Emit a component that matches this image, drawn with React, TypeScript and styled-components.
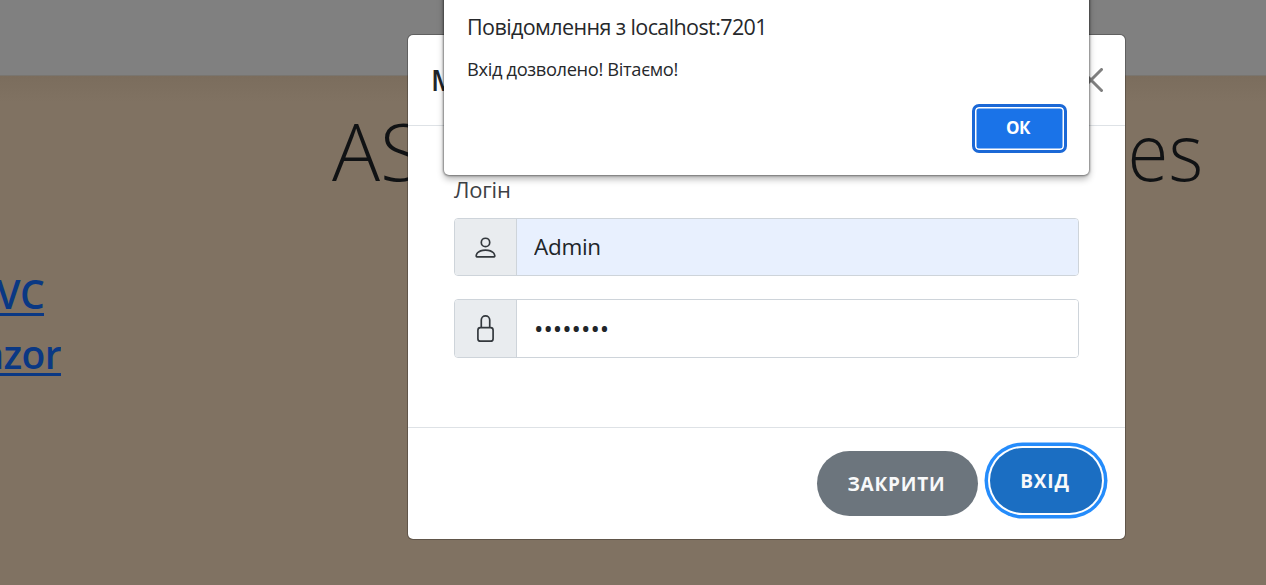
import React from 'react';
import styled, { createGlobalStyle } from 'styled-components';
import { BsPerson, BsLock } from 'react-icons/bs';

const GlobalStyle = createGlobalStyle`
  * { box-sizing: border-box; }
  body {
    margin: 0;
    overflow: hidden;
    background: #807262;
    font-family: "Open Sans", "Noto Sans", sans-serif;
    color: #212529;
  }
`;

const Page = styled.div`
  position: relative;
  height: 585px;
  overflow: hidden;
`;

const Navbar = styled.header`
  height: 76px;
  background: #808080;
  border-bottom: 1px solid #79756f;
`;

const Main = styled.main`
  height: 509px;
  background: linear-gradient(#7b6d5d, #807262 26px);
`;

const Title = styled.h1`
  display: flex;
  justify-content: space-between;
  margin: 0 0 0 332px;
  padding-top: 19px;
  width: 871px;
  font-size: 80px;
  line-height: 110px;
  font-weight: 300;
  color: #101214;
  white-space: nowrap;
`;

const TitleEnd = styled.span`
  transform: scaleX(0.93);
  transform-origin: right;
`;

const Links = styled.nav`
  display: flex;
  flex-direction: column;
  padding-top: 59px;
`;

const TopicLink = styled.a<{ $end: number }>`
  display: flex;
  justify-content: flex-end;
  overflow: hidden;
  width: ${(p) => p.$end}px;
  height: 60px;
  line-height: 60px;
  font-size: 39px;
  font-weight: 600;
  letter-spacing: -0.6px;
  color: #0a3884;
  white-space: nowrap;
  text-decoration: underline;
  text-decoration-thickness: 2.5px;
  text-underline-offset: 4px;
`;

const Modal = styled.section`
  position: absolute;
  left: 407px;
  top: 34px;
  width: 719px;
  height: 506px;
  display: flex;
  flex-direction: column;
  background: #fff;
  background-clip: padding-box;
  border: 1px solid rgba(0, 0, 0, 0.25);
  border-radius: 6px;
`;

const ModalHeader = styled.div`
  display: flex;
  align-items: center;
  justify-content: space-between;
  height: 91px;
  padding: 0 22px 0 23px;
  border-bottom: 1px solid #dee2e6;
`;

const ModalTitle = styled.h5`
  margin: 0;
  font-size: 28px;
  font-weight: 600;
`;

const CloseIcon = styled.svg`
  width: 24px;
  height: 24px;
  stroke: #7f7f7f;
  stroke-width: 3;
  stroke-linecap: round;
`;

const ModalBody = styled.div`
  flex: 1;
  padding: 47px 46px 0;
`;

const Label = styled.label`
  display: block;
  height: 45px;
  line-height: 32px;
  font-size: 22px;
  letter-spacing: -0.2px;
  color: #3d4145;
`;

const Field = styled.div<{ $height: number }>`
  display: flex;
  height: ${(p) => p.$height}px;
  margin-bottom: 23px;
  border: 1px solid #ced4da;
  border-radius: 4px;
  overflow: hidden;
`;

const FieldIcon = styled.span`
  display: flex;
  align-items: center;
  justify-content: center;
  width: 62px;
  border-right: 1px solid #ced4da;
  background: #e9ecef;
  color: #33383d;
  font-size: 27px;
`;

const FieldInput = styled.input<{ $filled?: boolean }>`
  flex: 1;
  min-width: 0;
  padding: 0 17px 1px;
  border: 0;
  outline: 0;
  background: ${(p) => (p.$filled ? '#e8f0fe' : '#fff')};
  color: #212529;
  font: ${(p) => (p.$filled ? 22.5 : 25)}px "Open Sans", "Noto Sans", sans-serif;
  letter-spacing: ${(p) => (p.$filled ? -0.3 : 0)}px;
`;

const ModalFooter = styled.div`
  display: flex;
  align-items: flex-start;
  justify-content: flex-end;
  gap: 12px;
  height: 112px;
  padding: 20px 23px 0 0;
  border-top: 1px solid #dee2e6;
`;

const PillButton = styled.button<{ $primary?: boolean }>`
  width: ${(p) => (p.$primary ? 112 : 161)}px;
  height: 65px;
  margin-top: ${(p) => (p.$primary ? 0 : 3)}px;
  padding: 0 2px 0 0;
  border: 0;
  border-radius: 33px;
  background: ${(p) => (p.$primary ? '#1b6ec2' : '#6c757d')};
  box-shadow: ${(p) => (p.$primary ? '0 0 0 2px #fff, 0 0 0 5.5px #258cfb' : 'none')};
  color: #f8f9fa;
  font: 700 19px "Open Sans", "Noto Sans", sans-serif;
  letter-spacing: 0.8px;
`;

const Alert = styled.div`
  position: absolute;
  left: 444px;
  top: -10px;
  width: 645px;
  height: 185px;
  padding: 20px 22px 0 23px;
  display: flex;
  flex-direction: column;
  background: #fff;
  border-radius: 0 0 5px 5px;
  box-shadow: 0 0 2px 1px rgba(0, 0, 0, 0.4), 0 4px 7px rgba(0, 0, 0, 0.3);
`;

const AlertTitle = styled.div`
  height: 34px;
  line-height: 34px;
  font-size: 21.5px;
  letter-spacing: -0.6px;
  color: #26282b;
`;

const AlertText = styled.div`
  margin-top: 10px;
  height: 30px;
  line-height: 30px;
  font-size: 18.3px;
  letter-spacing: -0.35px;
  color: #26282b;
`;

const OkButton = styled.button`
  align-self: flex-end;
  width: 95px;
  height: 49px;
  margin-top: 20px;
  padding: 0 3px 2px 0;
  border: 3px solid #1b68d6;
  border-radius: 7px;
  background: #1a73e8;
  box-shadow: inset 0 0 0 1.5px #fff;
  color: #fff;
  font: 700 17px "Open Sans", "Noto Sans", sans-serif;
  letter-spacing: -0.6px;
`;

export default function App() {
  return (
    <Page>
      <GlobalStyle />
      <Navbar />
      <Main>
        <Title>
          <span>ASP.NET</span>
          <TitleEnd>Technologies</TitleEnd>
        </Title>
        <Links>
          <TopicLink $end={44}>MVC</TopicLink>
          <TopicLink $end={61}>Razor</TopicLink>
        </Links>
      </Main>
      <Modal>
        <ModalHeader>
          <ModalTitle>MVC</ModalTitle>
          <CloseIcon viewBox="0 0 24 24" fill="none">
            <path d="M1.5 1.5 L22.5 22.5 M22.5 1.5 L1.5 22.5" />
          </CloseIcon>
        </ModalHeader>
        <ModalBody>
          <Label>Логін</Label>
          <Field $height={58}>
            <FieldIcon><BsPerson /></FieldIcon>
            <FieldInput $filled defaultValue="Admin" />
          </Field>
          <Field $height={59}>
            <FieldIcon><BsLock /></FieldIcon>
            <FieldInput type="password" defaultValue="password" />
          </Field>
        </ModalBody>
        <ModalFooter>
          <PillButton>ЗАКРИТИ</PillButton>
          <PillButton $primary>ВХІД</PillButton>
        </ModalFooter>
      </Modal>
      <Alert>
        <AlertTitle>Повідомлення з localhost:7201</AlertTitle>
        <AlertText>Вхід дозволено! Вітаємо!</AlertText>
        <OkButton>ОК</OkButton>
      </Alert>
    </Page>
  );
}
